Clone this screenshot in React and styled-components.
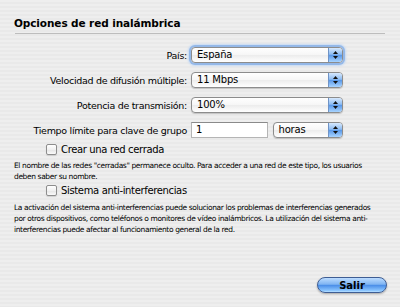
import React from "react";
import styled, { createGlobalStyle } from "styled-components";

const GlobalStyle = createGlobalStyle`
  html, body {
    margin: 0;
    padding: 0;
  }
  body {
    width: 400px;
    height: 307px;
    overflow: hidden;
    font-family: "DejaVu Sans", "Liberation Sans", sans-serif;
    color: #000;
    background: repeating-linear-gradient(#eeeeee 0 2px, #e9e9e9 2px 4px);
  }
`;

const Panel = styled.div`
  width: 400px;
  height: 307px;
  box-sizing: border-box;
  padding: 17px 13px 0 14px;
  display: flex;
  flex-direction: column;
`;

const Title = styled.h1`
  margin: 0;
  font-size: 10.5px;
  font-weight: bold;
  line-height: 12px;
  letter-spacing: -0.1px;
`;

const Separator = styled.hr`
  margin: 4px 2px 0 1px;
  border: 0;
  border-top: 1px solid #bdbdbd;
  height: 0;
`;

const Form = styled.div`
  margin-top: 13px;
  display: grid;
  grid-template-columns: 177px 152px;
  row-gap: 9px;
  align-items: center;
`;

const Label = styled.span`
  font-size: 9.5px;
  letter-spacing: -0.3px;
  text-align: right;
  padding-right: 4px;
  white-space: nowrap;
`;

const Inline = styled.div`
  display: flex;
  gap: 5px;
  align-items: center;
`;

const PopupBox = styled.div`
  box-sizing: border-box;
  height: 16px;
  width: ${(p) => p.$w || 152}px;
  display: flex;
  align-items: stretch;
  border: 1px solid #8c8c8c;
  border-radius: 4px;
  background: linear-gradient(#ffffff, #f6f6f6 50%, #ececec 51%, #ffffff);
  box-shadow: ${(p) =>
    p.$focus ? "0 0 0 2px #94b8e8, 0 0 2px 3px #c4d9f4" : "0 1px 1px rgba(0,0,0,0.18)"};
  overflow: hidden;
`;

const PopupText = styled.span`
  flex: 1;
  font-size: 10px;
  letter-spacing: -0.2px;
  line-height: 14px;
  padding-left: 5px;
  white-space: nowrap;
`;

const Arrows = styled.span`
  width: 13px;
  display: flex;
  align-items: center;
  justify-content: center;
  border-left: 1px solid #6f93c6;
  background: linear-gradient(#d6e8fd, #8dbcf2 45%, #5a98e8 52%, #a8d4ff);
`;

const TextField = styled.div`
  box-sizing: border-box;
  width: 77px;
  height: 16px;
  background: #fff;
  border: 1px solid #b5b5b5;
  border-top-color: #8a8a8a;
  font-size: 10px;
  line-height: 14px;
  padding-left: 4px;
`;

const CheckRow = styled.label`
  display: flex;
  align-items: center;
  gap: 4px;
  margin-left: 32px;
  margin-top: ${(p) => p.$top}px;
  font-size: 10px;
  letter-spacing: -0.35px;
  line-height: 13px;
`;

const Box = styled.span`
  box-sizing: border-box;
  width: 11px;
  height: 11px;
  border: 1px solid #8d8d8d;
  border-radius: 2px;
  background: linear-gradient(#ffffff, #f1f1f1 50%, #e4e4e4 51%, #fafafa);
  box-shadow: 0 1px 1px rgba(0, 0, 0, 0.12);
`;

const Note = styled.p`
  margin: ${(p) => p.$top}px 0 0 0;
  font-size: 7.5px;
  letter-spacing: -0.38px;
  line-height: 11px;
  width: ${(p) => p.$w}px;
`;

const Footer = styled.div`
  margin-top: auto;
  margin-bottom: 14px;
  display: flex;
  justify-content: flex-end;
`;

const AquaButton = styled.button`
  width: 70px;
  height: 16px;
  padding: 0;
  border: 1px solid #3e5d93;
  border-radius: 8px;
  font-family: inherit;
  font-size: 10px;
  font-weight: bold;
  color: #000;
  background: linear-gradient(#bcdcff, #7fb4f2 45%, #4a8ee8 52%, #8cc6ff 90%, #b9e0ff);
  box-shadow: 0 1px 2px rgba(0, 0, 0, 0.3);
`;

const UpDown = () => (
  <svg width="7" height="10" viewBox="0 0 7 10">
    <path d="M3.5 1 L6 4 L1 4 Z" fill="#111" />
    <path d="M1 6 L6 6 L3.5 9 Z" fill="#111" />
  </svg>
);

const Popup = ({ value, w, focus }) => (
  <PopupBox $w={w} $focus={focus}>
    <PopupText>{value}</PopupText>
    <Arrows>
      <UpDown />
    </Arrows>
  </PopupBox>
);

export default function App() {
  return (
    <>
      <GlobalStyle />
      <Panel>
        <Title>Opciones de red inalámbrica</Title>
        <Separator />
        <Form>
          <Label>País:</Label>
          <Popup value="España" focus />
          <Label>Velocidad de difusión múltiple:</Label>
          <Popup value="11 Mbps" />
          <Label>Potencia de transmisión:</Label>
          <Popup value="100%" />
          <Label>Tiempo límite para clave de grupo</Label>
          <Inline>
            <TextField>1</TextField>
            <Popup value="horas" w={71} />
          </Inline>
        </Form>
        <CheckRow $top={5}>
          <Box />
          Crear una red cerrada
        </CheckRow>
        <Note $top={4} $w={350}>
          El nombre de las redes "cerradas" permanece oculto. Para acceder a una red de este tipo, los
          usuarios deben saber su nombre.
        </Note>
        <CheckRow $top={2}>
          <Box />
          Sistema anti-interferencias
        </CheckRow>
        <Note $top={5} $w={362}>
          La activación del sistema anti-interferencias puede solucionar los problemas de
          interferencias generados por otros dispositivos, como teléfonos o monitores de vídeo
          inalámbricos. La utilización del sistema anti-interferencias puede afectar al funcionamiento
          general de la red.
        </Note>
        <Footer>
          <AquaButton>Salir</AquaButton>
        </Footer>
      </Panel>
    </>
  );
}
